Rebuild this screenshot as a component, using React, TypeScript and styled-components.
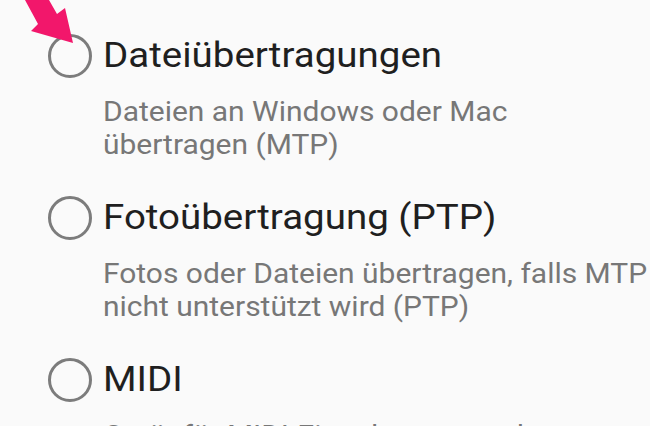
import React from "react";
import styled, { createGlobalStyle } from "styled-components";

const Global = createGlobalStyle`
  html, body {
    margin: 0;
    padding: 0;
    background: #fafafa;
    overflow: hidden;
  }
  body {
    font-family: Roboto, "Noto Sans", "Liberation Sans", sans-serif;
  }
`;

const Page = styled.div`
  position: relative;
  width: 650px;
  height: 426px;
  overflow: hidden;
  background: #fafafa;
  box-sizing: border-box;
  padding: 34px 0 0 48px;
  display: flex;
  flex-direction: column;
  gap: 35px;
`;

const Option = styled.div`
  display: grid;
  grid-template-columns: 44px 1fr;
  column-gap: 11px;
  row-gap: 17px;
  align-items: center;
`;

const Radio = styled.span`
  width: 44px;
  height: 44px;
  box-sizing: border-box;
  border: 3.3px solid #7c7c7c;
  border-radius: 50%;
`;

const Title = styled.div`
  font-size: 35px;
  line-height: 44px;
  color: #1f1f1f;
  white-space: nowrap;
  transform: scaleX(1.1);
  transform-origin: left center;
`;

const Desc = styled.div`
  grid-column: 2;
  font-size: 28px;
  line-height: 33px;
  color: #777777;
  min-height: 66px;
  white-space: nowrap;
  transform: scaleX(1.07);
  transform-origin: left top;
`;

const Arrow = styled.svg`
  position: absolute;
  left: 0;
  top: 0;
  width: 80px;
  height: 50px;
`;

const options = [
  {
    title: "Dateiübertragungen",
    desc: ["Dateien an Windows oder Mac", "übertragen (MTP)"],
  },
  {
    title: "Fotoübertragung (PTP)",
    desc: ["Fotos oder Dateien übertragen, falls MTP", "nicht unterstützt wird (PTP)"],
  },
  {
    title: "MIDI",
    desc: ["Gerät für MIDI-Eingabe verwenden"],
  },
];

export default function App() {
  return (
    <>
      <Global />
      <Page>
        {options.map((o) => (
          <Option key={o.title}>
            <Radio />
            <Title>{o.title}</Title>
            <Desc>
              {o.desc.map((l, i) => (
                <div key={i}>{l}</div>
              ))}
            </Desc>
          </Option>
        ))}
        <Arrow viewBox="0 0 80 50">
          <polygon
            points="25,0 49,0 57,14 65,8 73,43 31,31 38,24"
            fill="#f2176b"
          />
        </Arrow>
      </Page>
    </>
  );
}
